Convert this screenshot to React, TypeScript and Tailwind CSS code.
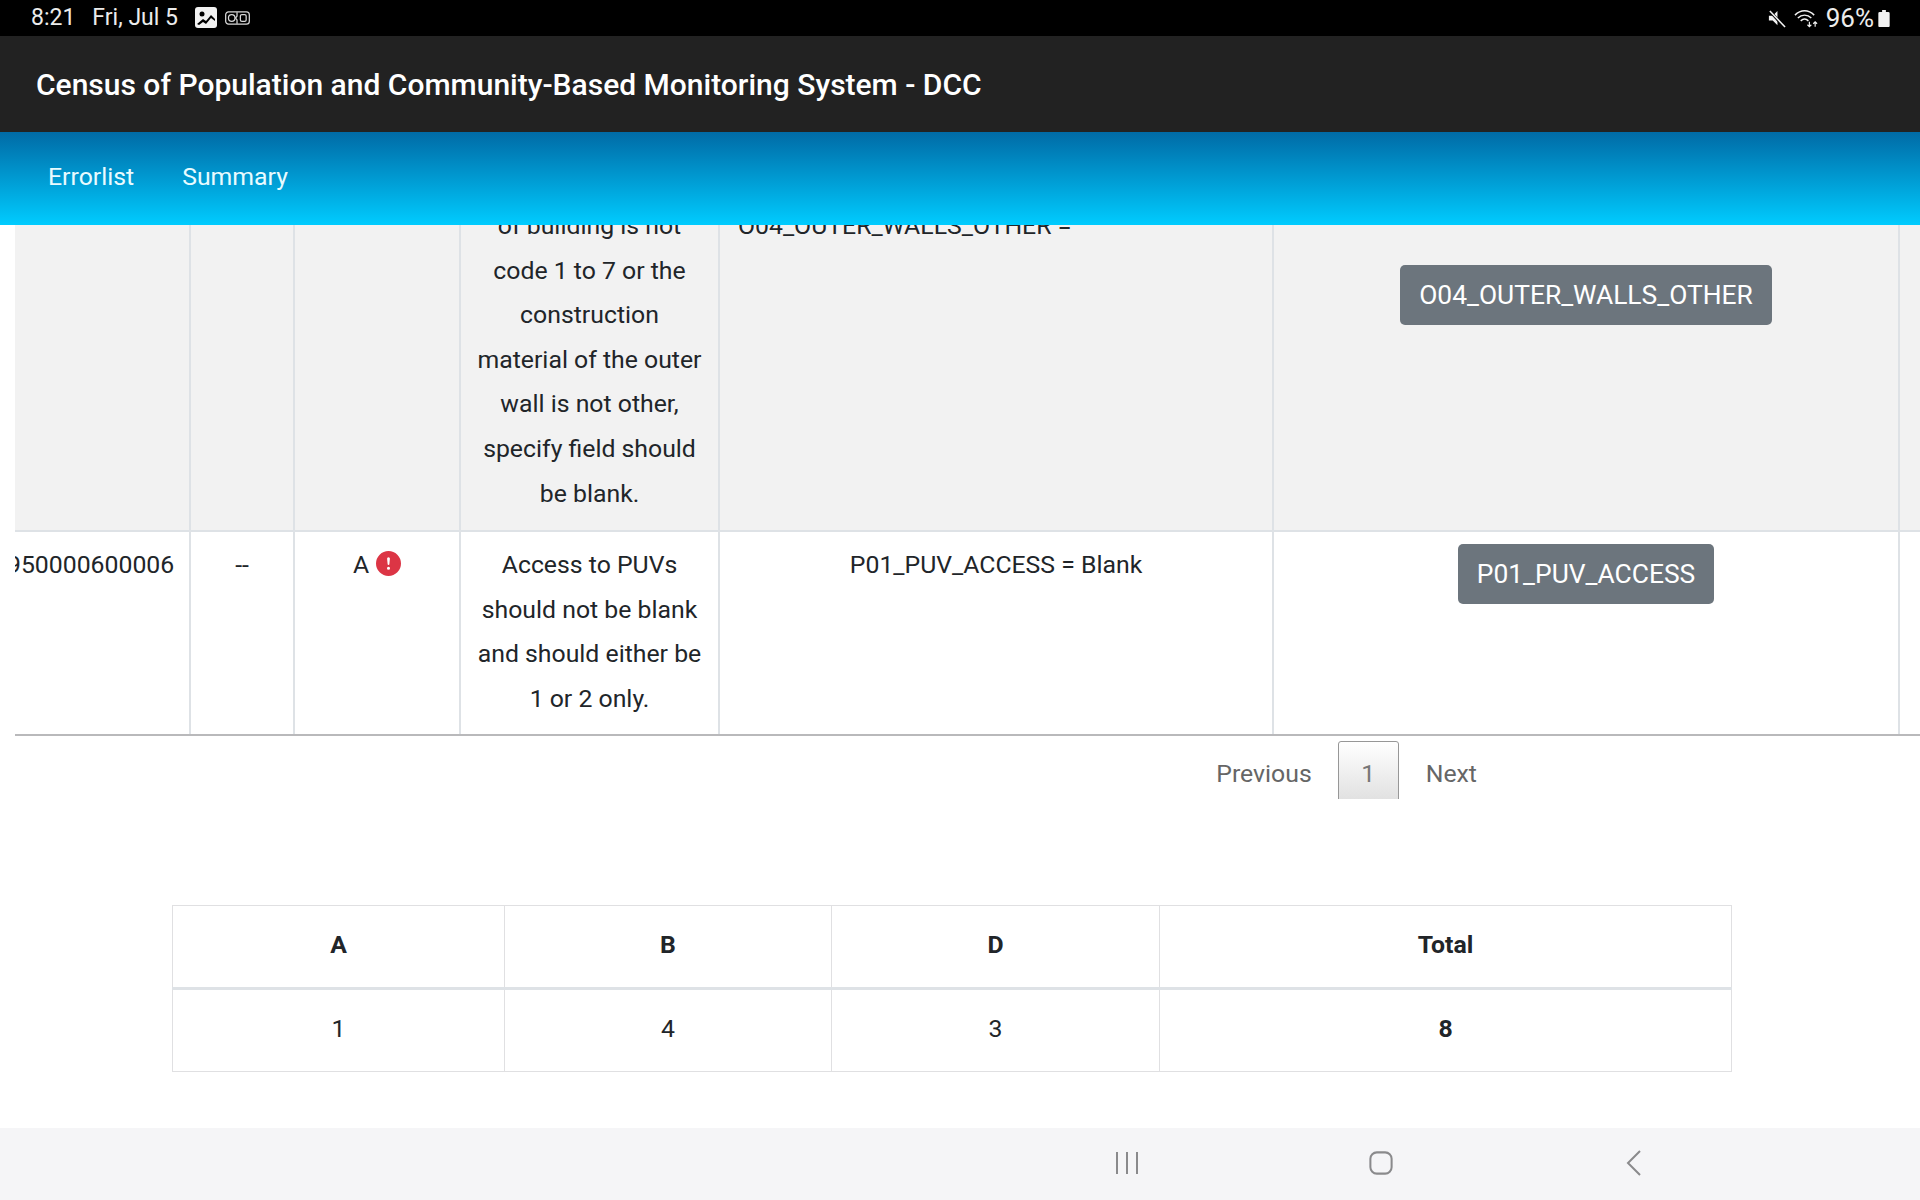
import { BsExclamationCircleFill } from "react-icons/bs";

function StatusBar() {
  return (
    <div className="flex h-9 shrink-0 items-center justify-between bg-black pl-[31px] pr-[30px] text-[23px] text-[#ececec]">
      <div className="flex items-center">
        <span>8:21</span>
        <span className="ml-[17px]">Fri, Jul 5</span>
        <svg viewBox="0 0 22 22" className="ml-[17px] h-[22px] w-[22px]">
          <rect width="22" height="21" rx="3" fill="#f2f2f2" />
          <circle cx="7" cy="7" r="2.5" fill="#000" />
          <path d="M2 17l6-5 3 2 5-6 4 4v2l-4-3-5 6-3-2-4 3z" fill="#000" />
        </svg>
        <svg viewBox="0 0 26 14" className="ml-[8px] h-[14px] w-[25px]" fill="none" stroke="#d8d8d8" strokeWidth="1.3">
          <rect x="0.7" y="0.7" width="24.6" height="12.6" rx="3" />
          <circle cx="7" cy="7" r="3.4" />
          <rect x="16" y="3.5" width="6" height="7" rx="1.5" />
          <path d="M12.5 1v4l-1.500 2 1.500 2v4" />
        </svg>
      </div>
      <div className="flex items-center">
        <svg viewBox="0 0 20 20" className="h-[19px] w-[19px]">
          <path d="M2 7h4l5-5v15l-5-5H2z" fill="#f2f2f2" />
          <path d="M2 1l16 18" stroke="#000" strokeWidth="3" />
          <path d="M3 2l16 17" stroke="#f2f2f2" strokeWidth="1.6" />
        </svg>
        <svg viewBox="0 0 26 22" className="ml-[8px] h-[22px] w-[25px]" fill="none" stroke="#f2f2f2" strokeWidth="1.5">
          <path d="M1 8c6-6 14-6 20 0" />
          <path d="M4 11c4-4 10-4 14 0" />
          <path d="M7 14c2.500-2.500 5.500-2.500 8 0" />
          <path d="M16 15v5M14 18l2 2 2-2" strokeWidth="1.2" />
          <path d="M22 20v-5M20 17l2-2 2 2" strokeWidth="1.2" />
        </svg>
        <span className="ml-[7px] text-[26px]">96%</span>
        <svg viewBox="0 0 12 18" className="ml-[4px] h-[17px] w-[12px]">
          <path d="M4 0h4v2h2.500a1.500 1.500 0 0 1 1.500 1.500V17a1 1 0 0 1-1 1H1a1 1 0 0 1-1-1V3.500A1.500 1.500 0 0 1 1.500 2H4z" fill="#f2f2f2" />
        </svg>
      </div>
    </div>
  );
}

function TagButton({ label }: { label: string }) {
  return (
    <span className="inline-block rounded-[5px] bg-[#6c757d] px-[19px] py-[11px] text-[26.400px] leading-[38px] text-white">
      {label}
    </span>
  );
}

const cell = "border-r-2 border-[#dee2e6] px-[16px] text-center align-top";

function ErrorTable() {
  return (
    <div className="ml-[15px] overflow-hidden border-b-2 border-[#b9b9bb]">
      <table className="-ml-[23px] -mt-[32px] w-[2200px] table-fixed border-collapse text-[24.800px] leading-[44.600px] text-[#212529]">
        <colgroup>
          <col className="w-[198px]" />
          <col className="w-[104px]" />
          <col className="w-[166px]" />
          <col className="w-[259px]" />
          <col className="w-[554px]" />
          <col className="w-[626px]" />
          <col />
        </colgroup>
        <tbody>
          <tr className="border-b-2 border-[#dee2e6] bg-[#f2f2f2]">
            <td className={cell} />
            <td className={cell} />
            <td className={cell} />
            <td className={`${cell} pb-[14px] pt-[11px]`}>
              of building is not code 1 to 7 or the construction material of the outer wall is not other, specify field should be blank.
            </td>
            <td className={`${cell} pt-[11px] !pl-[18px] !text-left`}>O04_OUTER_WALLS_OTHER =</td>
            <td className={`${cell} pt-[72px]`}>
              <TagButton label="O04_OUTER_WALLS_OTHER" />
            </td>
            <td />
          </tr>
          <tr>
            <td className={`${cell} pt-[11px] !pl-[15px]`}>950000600006</td>
            <td className={`${cell} pt-[11px]`}>--</td>
            <td className={`${cell} pt-[11px]`}>
              <span className="inline-flex items-center gap-[7px]">
                A
                <BsExclamationCircleFill className="-mt-[4px] h-[25px] w-[25px] text-[#dc3545]" />
              </span>
            </td>
            <td className={`${cell} pb-[12px] pt-[11px]`}>
              Access to PUVs should not be blank and should either be 1 or 2 only.
            </td>
            <td className={`${cell} pt-[11px]`}>P01_PUV_ACCESS = Blank</td>
            <td className={`${cell} pt-[12px]`}>
              <TagButton label="P01_PUV_ACCESS" />
            </td>
            <td />
          </tr>
        </tbody>
      </table>
    </div>
  );
}

function Pagination() {
  return (
    <div className="flex h-[63px] items-start justify-end overflow-hidden pr-[443px] pt-[5px] text-[24.800px] text-[#666666]">
      <span className="mr-[26px] mt-[11px] leading-[44px]">Previous</span>
      <span className="h-[70px] w-[61px] rounded-[3px] border border-[#979797] bg-gradient-to-b from-white to-[#dcdcdc] pt-[10px] text-center leading-[44px] text-[#777777]">
        1
      </span>
      <span className="ml-[27px] mt-[11px] leading-[44px]">Next</span>
    </div>
  );
}

function SummaryTable() {
  const heads = ["A", "B", "D", "Total"];
  const values = ["1", "4", "3", "8"];
  return (
    <div className="mt-[106px] px-[172px]">
      <table className="w-[1560px] table-fixed border-collapse border border-[#e0e0e2] text-center text-[24.800px] text-[#212529]">
        <colgroup>
          <col className="w-[332px]" />
          <col className="w-[327px]" />
          <col className="w-[328px]" />
          <col />
        </colgroup>
        <tbody>
          <tr className="h-[83px] border-b-[3px] border-[#dee2e6]">
            {heads.map((head) => (
              <th key={head} className="border border-[#e0e0e2] pb-[2px] font-bold">
                {head}
              </th>
            ))}
          </tr>
          <tr className="h-[83px]">
            {values.map((value, index) => (
              <td key={index} className={`border border-[#e0e0e2] pb-[3px] ${index === 3 ? "font-bold" : ""}`}>
                {value}
              </td>
            ))}
          </tr>
        </tbody>
      </table>
    </div>
  );
}

function SystemNav() {
  return (
    <div className="flex h-[72px] shrink-0 items-center bg-[#f5f5f7] pb-[2px] pl-[1115px]">
      <svg viewBox="0 0 24 24" className="h-[24px] w-[24px]" fill="none" stroke="#8a8a8c" strokeWidth="2">
        <path d="M2 1v22M12 1v22M22 1v22" />
      </svg>
      <svg viewBox="0 0 26 26" className="ml-[230px] h-[24px] w-[24px]" fill="none" stroke="#8a8a8c" strokeWidth="2.200">
        <rect x="1.500" y="1.500" width="23" height="23" rx="7" />
      </svg>
      <svg viewBox="0 0 16 26" className="ml-[233px] h-[26px] w-[16px]" fill="none" stroke="#8a8a8c" strokeWidth="2">
        <path d="M14 1L2 13l12 12" />
      </svg>
    </div>
  );
}

export default function App() {
  return (
    <div className="flex h-[1200px] w-[1920px] flex-col overflow-hidden bg-white font-['Roboto',sans-serif]">
      <StatusBar />
      <div className="flex h-[96px] shrink-0 items-center bg-[#222222] px-[36px] text-[30px] font-medium text-white">
        Census of Population and Community-Based Monitoring System - DCC
      </div>
      <nav className="flex h-[93px] shrink-0 items-center gap-[48px] bg-gradient-to-b from-[#016ba6] to-[#00ccff] pb-[4px] pl-[48px] text-[24.800px] text-[#e8fbff]">
        <span>Errorlist</span>
        <span>Summary</span>
      </nav>
      <main className="min-h-0 flex-1 overflow-hidden">
        <ErrorTable />
        <Pagination />
        <SummaryTable />
      </main>
      <SystemNav />
    </div>
  );
}
